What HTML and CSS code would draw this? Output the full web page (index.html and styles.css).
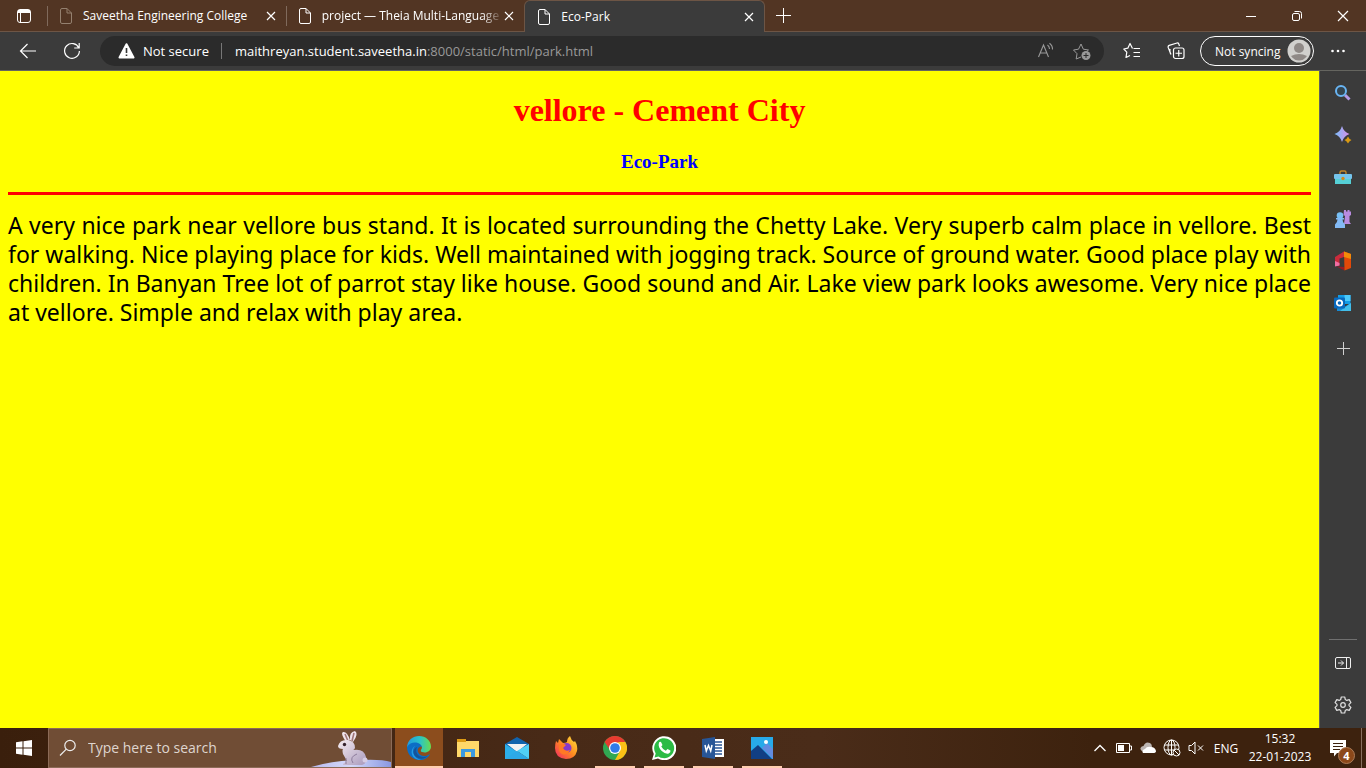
FILE: index.html
```html
<!DOCTYPE html>
<html lang="en">
<head>
<meta charset="utf-8">
<title>Eco-Park</title>
<link rel="stylesheet" href="styles.css">
</head>
<body>
<header class="tabbar">
  <button class="tab-menu" aria-label="Tab actions"><svg width="16" height="16" viewBox="0 0 16 16" fill="none" stroke="#fff"><rect x="1.5" y="1.5" width="13" height="13" rx="2.5"/><path d="M2 3.500h12" stroke-width="3"/><path d="M4.500 5v9"/></svg></button>
  <nav class="tabs">
    <div class="tab dim"><svg class="doc" width="14" height="16" viewBox="0 0 14 16"><path d="M1.500 2q0-1.500 1.500-1.500h5l4.500 4.500v9q0 1.500-1.500 1.500H3q-1.500 0-1.500-1.500zM8 .5V5h4.500"/></svg><button class="tab-name">Saveetha Engineering College</button><button class="close" aria-label="Close tab"><svg width="10" height="10" viewBox="0 0 10 10"><path d="M1 1l8 8M9 1L1 9"/></svg></button></div>
    <div class="tab"><svg class="doc" width="14" height="16" viewBox="0 0 14 16"><path d="M1.500 2q0-1.500 1.500-1.500h5l4.500 4.500v9q0 1.500-1.500 1.500H3q-1.500 0-1.500-1.500zM8 .5V5h4.500"/></svg><button class="tab-name fade">project — Theia Multi-Language</button><button class="close" aria-label="Close tab"><svg width="10" height="10" viewBox="0 0 10 10"><path d="M1 1l8 8M9 1L1 9"/></svg></button></div>
    <div class="tab active"><svg class="doc" width="14" height="16" viewBox="0 0 14 16"><path d="M1.500 2q0-1.500 1.500-1.500h5l4.500 4.500v9q0 1.500-1.500 1.500H3q-1.500 0-1.500-1.500zM8 .5V5h4.500"/></svg><button class="tab-name">Eco-Park</button><button class="close" aria-label="Close tab"><svg width="10" height="10" viewBox="0 0 10 10"><path d="M1 1l8 8M9 1L1 9"/></svg></button></div>
  </nav>
  <button class="new-tab" aria-label="New tab"><svg width="15" height="15" viewBox="0 0 15 15" stroke="#fff"><path d="M7.500 0v15M0 7.500h15"/></svg></button>
  <div class="window-controls">
    <button aria-label="Minimize"><svg width="12" height="12" viewBox="0 0 12 12" stroke="#fff"><path d="M1 6.500h10"/></svg></button>
    <button aria-label="Restore"><svg width="12" height="12" viewBox="0 0 12 12" fill="none" stroke="#fff"><rect x="1.500" y="3.500" width="7" height="7" rx="1.500"/><path d="M3.500 1.500h5q2 0 2 2v5"/></svg></button>
    <button aria-label="Close window"><svg width="12" height="12" viewBox="0 0 12 12" stroke="#fff" stroke-width="1.200"><path d="M1 1l10 10M11 1L1 11"/></svg></button>
  </div>
</header>

<div class="toolbar">
  <button class="nav-button" aria-label="Back"><svg width="18" height="16" viewBox="0 0 18 16" fill="none" stroke="#fff" stroke-width="1.200"><path d="M8.500 1L1.500 8l7 7M1.500 8H17"/></svg></button>
  <button class="nav-button" aria-label="Refresh"><svg width="18" height="18" viewBox="0 0 18 18" fill="none" stroke="#fff" stroke-width="1.200"><path d="M15.800 6A7.400 7.400 0 1 0 16.400 9M16.200 1v5h-5"/></svg></button>
  <div class="address">
    <button class="security"><svg width="17" height="16" viewBox="0 0 17 16"><path d="M8.500 1.200L15.500 14.500H1.500z" fill="#fff" stroke="#fff" stroke-width="2" stroke-linejoin="round"/><path d="M8.500 5v5M8.500 11.500v1.600" stroke="#333" stroke-width="1.600"/></svg>Not secure</button>
    <div class="url" role="textbox" contenteditable="true" spellcheck="false" aria-label="Address">maithreyan.student.saveetha.in<span>:8000/static/html/park.html</span></div>
    <button class="address-action" aria-label="Read aloud"><svg width="18" height="18" viewBox="0 0 18 18" fill="none" stroke="#999" stroke-width="1.100"><path d="M1.500 15L6.500 3l5 12M3.300 11h6.500M10.500 3q2 1.500 2 4M12.500 1.200q3.200 2.500 3 6.300"/></svg></button>
    <button class="address-action" aria-label="Add to favorites"><svg width="20" height="20" viewBox="0 0 20 20" fill="none" stroke="#999"><path d="M9 16l-4.800 2 .8-5.300L1.500 9l5-.8L9 3l2.300 5.200 5.200.8-2 1.700" stroke-linejoin="round"/><circle cx="14" cy="14.500" r="4.500" fill="#999" stroke="none"/><path d="M14 12v5M11.500 14.500h5" stroke="#2b2b2b"/></svg></button>
  </div>
  <button class="tool" aria-label="Favorites"><svg width="18" height="18" viewBox="0 0 18 18" fill="none" stroke="#fff" stroke-width="1.200"><path d="M9.500 6.500L7 1.500 4.800 6.200.8 7l3 3.200-.8 5.300 4-2M10.500 6.500H17M10.500 10.500H17M10.500 14.500H17" stroke-linejoin="round"/></svg></button>
  <button class="tool" aria-label="Collections"><svg width="18" height="18" viewBox="0 0 18 18" fill="none" stroke="#fff" stroke-width="1.200"><rect x="6.500" y="6" width="10.500" height="10.500" rx="2"/><path d="M11.750 8v6.500M8.500 11.250h6.500M4 12.500L1.200 5.500Q.8 4 2.200 3.400L10 1q1.300-.3 1.800 1l.7 2M4 12.500Q2.500 11 3 7"/></svg></button>
  <button class="profile">Not syncing<svg width="24" height="24" viewBox="0 0 24 24"><circle cx="12" cy="12" r="11.500" fill="#d1d0cd"/><circle cx="12" cy="9" r="5" fill="#8f8986"/><path d="M4 17q8-4 16 0a9.500 9.500 0 0 1-16 0" fill="#8f8986"/></svg></button>
  <button class="more" aria-label="Settings and more"><svg width="14" height="4" viewBox="0 0 14 4" fill="#fff"><circle cx="1.500" cy="2" r="1.300"/><circle cx="7" cy="2" r="1.300"/><circle cx="12.500" cy="2" r="1.300"/></svg></button>
</div>

<div class="workspace">
  <main class="page">
    <h1>vellore - Cement City</h1>
    <h3>Eco-Park</h3>
    <hr>
    <p>A very nice park near vellore bus stand. It is located surrounding the Chetty Lake. Very superb calm place in vellore. Best for walking. Nice playing place for kids. Well maintained with jogging track. Source of ground water. Good place play with children. In Banyan Tree lot of parrot stay like house. Good sound and Air. Lake view park looks awesome. Very nice place at vellore. Simple and relax with play area.</p>
  </main>
  <aside class="sidebar">
    <button aria-label="Search"><svg width="18" height="18" viewBox="0 0 18 18" fill="none"><path d="M11 11l4.500 4.500" stroke="#b59be8" stroke-width="3"/><circle cx="7" cy="7" r="5" fill="#344550" stroke="#69b5f4" stroke-width="2"/></svg></button>
    <button aria-label="Discover"><svg width="18" height="18" viewBox="0 0 18 18"><defs><linearGradient id="star"><stop stop-color="#78bdf8"/><stop offset="1" stop-color="#d98fe8"/></linearGradient></defs><path d="M8 0q1.800 6.200 7.500 8Q9.800 9.800 8 16 6.200 9.800.5 8 6.200 6.200 8 0" fill="url(#star)"/><path d="M14 10.500q1 2.500 3.500 3.500-2.500 1-3.500 3.500-1-2.500-3.500-3.500 2.500-1 3.500-3.500" fill="#d99a13"/></svg></button>
    <button aria-label="Shopping"><svg width="18" height="16" viewBox="0 0 18 16"><path d="M6 5V3.500Q6 2 7.500 2h3Q12 2 12 3.500V5" fill="none" stroke="#c38728" stroke-width="1.400"/><rect x="1" y="8" width="16" height="7" fill="#55d0d6"/><rect y="5" width="18" height="5" rx="1" fill="#75c4ec"/><circle cx="9" cy="9.500" r="1.700" fill="#d18a19"/></svg></button>
    <button aria-label="Games"><svg width="18" height="20" viewBox="0 0 18 20"><path d="M10 1h2v1.500h1.500V1h2v1.500H17V6l-1.500 1v6l1.500 2h-7l1-8-1.500-1z" fill="#b98be0"/><circle cx="6" cy="6.500" r="3.300" fill="#77bff5"/><path d="M2 9h8v1.500H8.500q0 3 2.500 5V19H1v-3.500q2.500-2 2.500-5H2z" fill="#83baf4"/></svg></button>
    <button aria-label="Office"><svg width="18" height="20" viewBox="0 0 18 20"><path d="M1 6l9-5.500V6L5.500 7.500v7L1 15z" fill="#c92b3c"/><path d="M1 10l4.500 2v2.500L1 15.500z" fill="#f06da2"/><path d="M2.500 15.500l8 .5v3.500z" fill="#9a1b24"/><path d="M10 .5L17 3v14l-6.500 2.500z" fill="#e34908"/><path d="M10 .5L17 3v5l-7-2z" fill="#f38a08"/></svg></button>
    <button aria-label="Outlook"><svg width="18" height="18" viewBox="0 0 18 18"><path d="M4 1h12.500v9H4z" fill="#139ce6"/><path d="M10.500 1h6v6h-6z" fill="#4bc9fa"/><path d="M3 9l7 4 7-4v8H3z" fill="#168bd5"/><path d="M6 17l11-8v8z" fill="#42bee9"/><rect y="3.500" width="11" height="11" rx="1" fill="#0869bd"/><circle cx="5.500" cy="9" r="2.700" fill="none" stroke="#fff" stroke-width="1.800"/></svg></button>
    <button class="add-app" aria-label="Customize"><svg width="13" height="13" viewBox="0 0 13 13" stroke="#d0d0d0"><path d="M6.500 0v13M0 6.500h13"/></svg></button>
    <div class="sidebar-bottom">
      <button aria-label="Hide sidebar"><svg width="18" height="14" viewBox="0 0 18 14" fill="none" stroke="#eee"><rect x="1.500" y="1.500" width="15" height="11" rx="1.500"/><path d="M12.500 1.500v11M4 7h5.500M7 4.500L9.500 7 7 9.500"/></svg></button>
      <button aria-label="Sidebar settings"><svg width="18" height="18" viewBox="0 0 18 18" fill="none" stroke="#ddd" stroke-width="1.200"><path d="M7.300 1h3.400l.6 2.500 1.500.9 2.400-.8 1.700 3L15 8.400v1.200l1.900 1.800-1.700 3-2.400-.8-1.500.9-.6 2.500H7.300l-.6-2.500-1.500-.9-2.400.8-1.700-3L3 9.600V8.400L1.100 6.600l1.700-3 2.400.8 1.500-.9z" stroke-linejoin="round"/><circle cx="9" cy="9" r="2.300"/></svg></button>
    </div>
  </aside>
</div>

<footer class="taskbar">
  <button class="start" aria-label="Start"><svg width="16" height="16" viewBox="0 0 16 16" fill="#fff"><path d="M0 2.200L6.500 1.300V7.500H0zM7.500 1.200L16 0v7.500H7.500zM0 8.500h6.500v6.200L0 13.800zM7.500 8.500H16V16l-8.500-1.200z"/></svg></button>
  <div class="search">
    <svg width="18" height="18" viewBox="0 0 18 18" fill="none" stroke="#eee" stroke-width="1.200"><circle cx="11" cy="6.500" r="5.200"/><path d="M7.300 10.200L1 16.500"/></svg>
    <input type="text" placeholder="Type here to search" aria-label="Type here to search">
    <svg class="rabbit" width="82" height="38" viewBox="0 0 82 38"><defs><linearGradient id="snow"><stop stop-color="#b8baf0"/><stop offset=".5" stop-color="#d5dafa"/><stop offset="1" stop-color="#8998e2"/></linearGradient><linearGradient id="fur" x2="1" y2="1"><stop stop-color="#f6ecf0"/><stop offset="1" stop-color="#a99abd"/></linearGradient></defs><path d="M2 38Q26 31 52 31q20-1 30 2v5z" fill="url(#snow)"/><path d="M37 13Q31 4 34 3q4-1 7 8zM41 11Q40 3 46 2q4 3-2 11z" fill="#eee3eb"/><path d="M36 5l3 7M45 4l-2 8" stroke="#9f7779" stroke-width="1.600"/><path d="M29 17q2-7 10-6 7 1 7 8-1 2-2 2 11-2 13 7 1 7-4 8H34v-1l4-3-4-7q-1-4 0-5-5 0-5-3z" fill="url(#fur)"/><path d="M44 34q-4-6 4-9M37 29v6" fill="none" stroke="#8d7c9c"/><circle cx="35.500" cy="15.500" r="1.700" fill="#35222c"/><circle cx="56" cy="31" r="2.500" fill="#d6cce4"/></svg>
  </div>
  <div class="apps">
    <button class="app current" aria-label="Microsoft Edge"><svg width="24" height="24" viewBox="0 0 24 24"><defs><linearGradient id="edge"><stop stop-color="#209ae0"/><stop offset=".55" stop-color="#2bc5c5"/><stop offset="1" stop-color="#68dc50"/></linearGradient></defs><path d="M0 12C0 4 6 0 12 0c7 0 12 5 12 10.500 0 5-5 7-9 5.500-2-.8-1-2 0-4 0-5-9-7-15 0" fill="url(#edge)"/><path d="M0 11c4-7 14-5 15 0-3-1-5 2-4 5 2 5 8 5 12 2-2 4-6 6-10 6C5 24 0 18 0 11" fill="#0c6ec5"/><path d="M8 10c-4 4-2 12 6 14C4 24 2 14 8 10" fill="#239be4"/><path d="M10 11c-3 7 3 12 11 9-3 3-9 4-13 0-3-4-1-8 2-9" fill="#14549a"/></svg></button>
    <button class="app" aria-label="File Explorer"><svg width="22" height="20" viewBox="0 0 22 20"><path d="M0 1h8l1 2h13v16H0z" fill="#ffd869"/><path d="M0 1h9v3H0z" fill="#dd9b14"/><path d="M4 11h14v8h-4v-5H8v5H4z" fill="#3c9ae0"/></svg></button>
    <button class="app" aria-label="Mail"><svg width="24" height="24" viewBox="0 0 24 24"><path d="M0 8l12-7 12 7v6H0z" fill="#1264ad"/><path d="M2 8h20L12 16z" fill="#f2f2f2"/><path d="M0 8l24 15H0z" fill="#2caee9"/><path d="M24 8v15L12 15z" fill="#50cff5"/><path d="M12 15L0 23h24z" fill="#2da9e6"/></svg></button>
    <button class="app" aria-label="Firefox"><svg width="24" height="24" viewBox="0 0 24 24"><defs><linearGradient id="fire" x1="1" y1="0" x2="0" y2="1"><stop stop-color="#ffe43b"/><stop offset=".5" stop-color="#ff8a20"/><stop offset="1" stop-color="#f02367"/></linearGradient></defs><path d="M2 5l2 2 1-4 4 4q3 0 4-1 0-4 3-6 1 4 4 6l1-1q3 5 2 10-2 8-11 8Q1 22 1 12q0-4 1-7" fill="url(#fire)"/><circle cx="12.500" cy="12" r="5" fill="#8739c9"/><path d="M5 9q5-2 7 0l-3 3q2 4 7 2-3 6-8 4-4-2-3-9" fill="#ff7924"/></svg></button>
    <button class="app open" aria-label="Chrome"><svg width="24" height="24" viewBox="0 0 24 24"><circle cx="12" cy="12" r="12" fill="#31a852"/><path d="M1.600 6A12 12 0 0 1 22.400 6L12 7.500 7 14z" fill="#e73b30"/><path d="M22.400 6A12 12 0 0 1 12 24l5-9-2-9z" fill="#fbc116"/><circle cx="12" cy="12" r="6" fill="#fff"/><circle cx="12" cy="12" r="4.800" fill="#317be8"/></svg></button>
    <button class="app open" aria-label="WhatsApp"><svg width="24" height="24" viewBox="0 0 24 24"><path d="M0 24l1.800-6A12 12 0 1 1 6 22.400z" fill="#fff"/><path d="M2.500 21.500l1.200-4A10 10 0 1 1 6.500 20.400z" fill="#2bbb45"/><path d="M7 6.500Q8 5.500 9 6l1.500 3-1.200 1.500q1.500 3 4.500 4.200L15.500 13l3 1.500q.3 2-1.800 3-3 1-7-2.500-4-4-2.700-8.500" fill="#fff"/></svg></button>
    <button class="app open" aria-label="Word"><svg width="24" height="24" viewBox="0 0 24 24"><path d="M12 3h11v18H12z" fill="#fff"/><path d="M14 6h7M14 9h7M14 12h7M14 15h7M14 18h7" stroke="#285697" stroke-width="1.300"/><path d="M1 3l13-2v22L1 21z" fill="#285697"/><path d="M4 9l1.300 6L7.500 9.500 9.700 15 11 9" fill="none" stroke="#fff" stroke-width="1.500"/></svg></button>
    <button class="app open" aria-label="Photos"><svg width="22" height="22" viewBox="0 0 22 22"><path d="M0 0h22v22H0z" fill="#27aae9"/><path d="M11 11l5-5 6 6v10z" fill="#628bdf"/><path d="M0 14l7-6 14 14H0z" fill="#113f83"/><circle cx="15" cy="5" r="2" fill="#fff"/></svg></button>
  </div>
  <div class="tray">
    <button aria-label="Hidden icons"><svg width="14" height="8" viewBox="0 0 14 8" fill="none" stroke="#fff" stroke-width="1.300"><path d="M1.500 7L7 1.500 12.500 7"/></svg></button>
    <button aria-label="Battery"><svg width="16" height="10" viewBox="0 0 16 10"><path d="M.5.500h13v9H.5zM14 3h1.500v4H14" fill="none" stroke="#fff"/><path d="M2 2h6v6H2z" fill="#fff"/></svg></button>
    <button aria-label="OneDrive"><svg width="16" height="12" viewBox="0 0 16 12"><path d="M3 9Q0 9 .5 6q1-2 3-2 2-5 6.500-3 2 1 2 4l-4 5z" fill="#bcb5b2"/><path d="M3 11Q1 8 5 7q2-3 6-2 4 0 5 4 0 2-3 2z" fill="#fff"/></svg></button>
    <button aria-label="Network"><svg width="18" height="18" viewBox="0 0 18 18" fill="none" stroke="#fff"><circle cx="8.500" cy="8.500" r="7.500"/><ellipse cx="8.500" cy="8.500" rx="3.500" ry="7.500"/><path d="M1.500 6h14M1.500 11h14M8.500 1v15"/><circle cx="13.500" cy="13.500" r="3.500" fill="#3d220e"/><path d="M11 11l5 5"/></svg></button>
    <button aria-label="Volume"><svg width="16" height="14" viewBox="0 0 16 14" fill="none" stroke="#fff"><path d="M1 4.500h2.500L7 1v12L3.500 9.500H1zM10 4.500l5 5M15 4.500l-5 5"/></svg></button>
    <button class="language">ENG</button>
    <button class="clock"><span>15:32</span><span>22-01-2023</span></button>
    <button class="notifications" aria-label="4 notifications"><svg width="17" height="17" viewBox="0 0 17 17"><path d="M0 0h16v13H7l-3 3.500V13H0z" fill="#fff"/><path d="M3 3.500h10M3 6.500h10M3 9.500h7" stroke="#3d220e"/></svg><span class="count">4</span></button>
  </div>
</footer>
</body>
</html>
```
FILE: styles.css
```css
* { box-sizing: border-box; }
body {
  margin: 0;
  height: 100vh;
  display: flex;
  flex-direction: column;
  overflow: hidden;
  background: #3b3b3b;
  color: #fff;
  font-family: "Open Sans", "Noto Sans", sans-serif;
  font-size: 12px;
}
button {
  display: flex;
  align-items: center;
  justify-content: center;
  flex-shrink: 0;
  padding: 0;
  border: 0;
  background: none;
  color: inherit;
  font: inherit;
}
svg { flex-shrink: 0; display: block; }

.tabbar {
  display: flex;
  flex-shrink: 0;
  height: 32px;
  background: #523523;
  border-bottom: 1px solid #6d5545;
}
.tab-menu { width: 47px; }
.tabs { display: flex; flex: 0 1 718px; min-width: 0; }
.tab {
  position: relative;
  display: flex;
  align-items: center;
  flex: 1 1 0;
  min-width: 0;
  padding: 0 9px 0 12px;
}
.tab::before {
  content: "";
  position: absolute;
  left: 0;
  top: 6px;
  height: 20px;
  border-left: 1px solid #806a5c;
}
.tab .doc { fill: none; stroke: #fff; }
.tab.dim .doc { stroke: #94806f; }
.tab-name {
  flex: 1 1 0;
  min-width: 0;
  margin-left: 10px;
  justify-content: flex-start;
  overflow: hidden;
  white-space: nowrap;
}
.fade { -webkit-mask-image: linear-gradient(90deg, #000 88%, transparent); mask-image: linear-gradient(90deg, #000 88%, transparent); }
.close { width: 12px; height: 24px; }
.close svg { stroke: #fff; stroke-width: 1.2; }
.tab.active {
  height: 32px;
  background: #3b3b3b;
  border: 1px solid #6d5545;
  border-bottom: 0;
  border-radius: 6px 6px 0 0;
}
.tab.active::before { display: none; }
.new-tab { width: 36px; }
.window-controls { display: flex; margin-left: auto; }
.window-controls button { width: 46px; }

.toolbar {
  display: flex;
  align-items: center;
  flex-shrink: 0;
  height: 39px;
  padding: 0 7px 0 6px;
  border-bottom: 1px solid #65655f;
}
.nav-button { width: 44px; height: 30px; }
.address {
  display: flex;
  align-items: center;
  flex: 1;
  min-width: 0;
  height: 30px;
  margin: 0 6px;
  padding: 0 4px 0 18px;
  border-radius: 15px;
  background: #2b2b2b;
  font-size: 13px;
}
.security {
  gap: 8px;
  height: 16px;
  padding-right: 12px;
  border-right: 1px solid #777;
}
.url {
  flex: 1;
  min-width: 0;
  padding-left: 13px;
  overflow: hidden;
  white-space: nowrap;
  outline: 0;
}
.url span { color: #999; }
.address-action { width: 36px; height: 30px; }
.tool { width: 44px; height: 30px; }
.profile {
  justify-content: space-between;
  width: 114px;
  height: 30px;
  margin-left: 2px;
  padding: 0 2px 0 14px;
  border: 1px solid #fff;
  border-radius: 15px;
}
.more { width: 42px; height: 30px; margin-left: 3px; }

.workspace { display: flex; flex: 1; min-height: 0; }
.page {
  flex: 1;
  min-width: 0;
  padding: 0 8px;
  overflow: hidden;
  background: #ff0;
  color: #000;
}
.page h1 {
  margin: 21px 0 22px;
  color: #f00;
  font: bold 32px/37px "Liberation Serif", serif;
  text-align: center;
}
.page h3 {
  margin: 0 0 20px;
  color: #00f;
  font: bold 19px/21px "Liberation Serif", serif;
  text-align: center;
}
.page hr { height: 3px; margin: 0; border: 0; background: #f00; }
.page p {
  margin: 16px 0;
  font: 23px/29px "Noto Sans", sans-serif;
  text-align: justify;
}
.sidebar {
  display: flex;
  flex-direction: column;
  width: 47px;
  padding-top: 1px;
  border-left: 1px solid #62625c;
}
.sidebar button { height: 42px; width: 100%; }
.sidebar .add-app { height: 48px; }
.sidebar-bottom {
  margin: auto 9px 2px;
  border-top: 1px solid #707070;
  padding-top: 2px;
}

.taskbar {
  display: flex;
  flex-shrink: 0;
  height: 40px;
  background: linear-gradient(90deg, #3a1f0c, #482a17 40%, #4a2c19 60%, #3d220e 80%);
}
.start { width: 48px; }
.search {
  position: relative;
  display: flex;
  align-items: center;
  flex: 0 1 344px;
  min-width: 0;
  padding-left: 10px;
  border: 1px solid #8c6b57;
  background: #704d35;
}
.search input {
  flex: 1;
  min-width: 0;
  margin-left: 11px;
  padding: 0;
  border: 0;
  outline: 0;
  background: none;
  color: #fff;
  font: 14px/20px "Open Sans", sans-serif;
}
.search input::placeholder { color: #dfd5cf; opacity: 1; }
.rabbit { position: absolute; right: 0; bottom: 0; }
.apps { display: flex; margin-left: 3px; }
.app { position: relative; width: 49px; }
.app.current { width: 48px; background: #8c4d1d; }
.app.open::after, .app.current::after {
  content: "";
  position: absolute;
  left: 5px;
  right: 4px;
  bottom: 0;
  height: 2px;
  background: #ffceb0;
}
.app.current::after { left: 0; right: 0; }
.tray {
  display: flex;
  margin-left: auto;
  margin-right: 4px;
  border-right: 1px solid #88705f;
}
.tray button { width: 24px; }
.tray .language { width: 36px; }
.tray .clock { flex-direction: column; width: 72px; line-height: 18px; }
.tray .notifications { position: relative; width: 44px; margin-right: 1px; }
.count {
  position: absolute;
  right: 5px;
  bottom: 4px;
  width: 17px;
  border: 1px solid #ad7c58;
  border-radius: 50%;
  background: #8c481a;
  font-size: 11px;
  font-weight: bold;
  line-height: 15px;
}
```
